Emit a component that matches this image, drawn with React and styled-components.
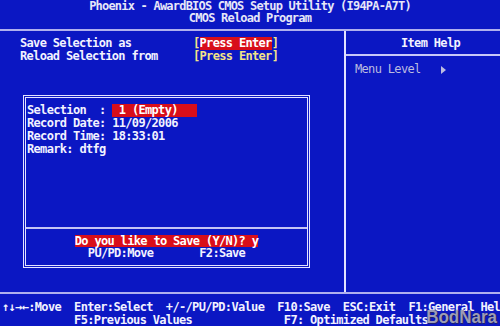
import React from "react";
import styled, { createGlobalStyle } from "styled-components";

const GlobalStyle = createGlobalStyle`
  html, body {
    margin: 0;
    padding: 0;
    background: #0b17c3;
  }
`;

const Screen = styled.div`
  position: relative;
  width: 500px;
  height: 326px;
  overflow: hidden;
  background: #0b17c3;
  display: flex;
  flex-direction: column;
  font-family: "DejaVu Sans Mono", "Liberation Mono", monospace;
  font-weight: 700;
  font-size: 12px;
  letter-spacing: -0.67px;
  color: #f2f2ff;
  white-space: pre;
`;

const Header = styled.div`
  height: 29px;
  display: flex;
  flex-direction: column;
  align-items: center;
  line-height: 12px;
  letter-spacing: -0.79px;
  color: #e6e6f8;
  margin-top: -1px;
  padding-top: 1px;
`;

const Rule = styled.div`
  height: 2px;
  flex: none;
  background: ${(p) => p.color || "#b0b0ee"};
`;

const Main = styled.div`
  height: 261px;
  display: flex;
`;

const LeftPanel = styled.div`
  width: 346px;
  border-right: 2px solid #e2e2ff;
  padding: 6px 0 0 20px;
  box-sizing: border-box;
  display: flex;
  flex-direction: column;
`;

const Row = styled.div`
  display: flex;
  line-height: 13px;
  height: 13px;
`;

const Label = styled.span`
  width: 173px;
`;

const Bracket = styled.span`
  color: #f2e488;
`;

const Value = styled.span`
  color: ${(p) => (p.$selected ? "#ffffff" : "#f2e488")};
  background: ${(p) => (p.$selected ? "#d80e1a" : "transparent")};
`;

const Dialog = styled.div`
  margin: 32px 0 0 3px;
  width: 287px;
  height: 173px;
  box-sizing: border-box;
  border: 3px double #e4e4ff;
  display: flex;
  flex-direction: column;
`;

const Records = styled.div`
  flex: 1;
  padding: 6px 0 0 1px;
  display: flex;
  flex-direction: column;
`;

const Highlight = styled.span`
  background: #d80e1a;
  color: #ffffff;
`;

const Separator = styled.div`
  height: 2px;
  background: #c4c4f4;
`;

const Prompt = styled.div`
  height: 36px;
  padding-top: 6px;
  box-sizing: border-box;
  display: flex;
  flex-direction: column;
  align-items: center;
  line-height: 12px;
`;

const RightPanel = styled.div`
  flex: 1;
  display: flex;
  flex-direction: column;
`;

const HelpTitle = styled.div`
  height: 25px;
  box-sizing: border-box;
  padding: 6px 0 0 55px;
  line-height: 13px;
  border-bottom: 2px solid #c8c8f8;
`;

const MenuLevel = styled.div`
  padding: 7px 0 0 9px;
  line-height: 13px;
  color: #bcbce0;
  font-weight: 400;
  display: flex;
  align-items: center;
`;

const Arrow = styled.span`
  display: inline-block;
  margin-left: 20px;
  width: 0;
  height: 0;
  border-top: 4px solid transparent;
  border-bottom: 4px solid transparent;
  border-left: 5px solid #bcbce0;
`;

const Footer = styled.div`
  flex: 1;
  padding: 7px 0 0 2px;
  line-height: 13px;
  overflow: hidden;
`;

const Watermark = styled.div`
  position: absolute;
  right: 3px;
  bottom: -2px;
  font-family: "Liberation Sans", Arial, sans-serif;
  font-size: 17px;
  font-weight: 700;
  letter-spacing: 0;
  color: rgba(180, 180, 205, 0.85);
  text-shadow: 0 0 1px #202040, 1px 1px 0 rgba(40, 40, 80, 0.7);
  transform: scaleY(1.05);
`;

export default function App() {
  return (
    <>
      <GlobalStyle />
      <Screen>
        <Header>
          <div>Phoenix - AwardBIOS CMOS Setup Utility (I94PA-A7T)</div>
          <div>CMOS Reload Program</div>
        </Header>
        <Rule />
        <Main>
          <LeftPanel>
            <Row>
              <Label>Save Selection as</Label>
              <Bracket>[</Bracket>
              <Value $selected>Press Enter</Value>
              <Bracket>]</Bracket>
            </Row>
            <Row>
              <Label>Reload Selection from</Label>
              <Bracket>[</Bracket>
              <Value>Press Enter</Value>
              <Bracket>]</Bracket>
            </Row>
            <Dialog>
              <Records>
                <Row>
                  <span>Selection  : </span>
                  <Highlight> 1 (Empty)   </Highlight>
                </Row>
                <Row>Record Date: 11/09/2006</Row>
                <Row>Record Time: 18:33:01</Row>
                <Row>Remark: dtfg</Row>
              </Records>
              <Separator />
              <Prompt>
                <Highlight>Do you like to Save (Y/N)? y</Highlight>
                <div>PU/PD:Move       F2:Save</div>
              </Prompt>
            </Dialog>
          </LeftPanel>
          <RightPanel>
            <HelpTitle>Item Help</HelpTitle>
            <MenuLevel>
              Menu Level
              <Arrow />
            </MenuLevel>
          </RightPanel>
        </Main>
        <Rule />
        <Footer>
          <div>↑↓→←:Move  Enter:Select  +/-/PU/PD:Value  F10:Save  ESC:Exit  F1:General Help</div>
          <div>           F5:Previous Values              F7: Optimized Defaults</div>
        </Footer>
        <Watermark>BodNara</Watermark>
      </Screen>
    </>
  );
}
